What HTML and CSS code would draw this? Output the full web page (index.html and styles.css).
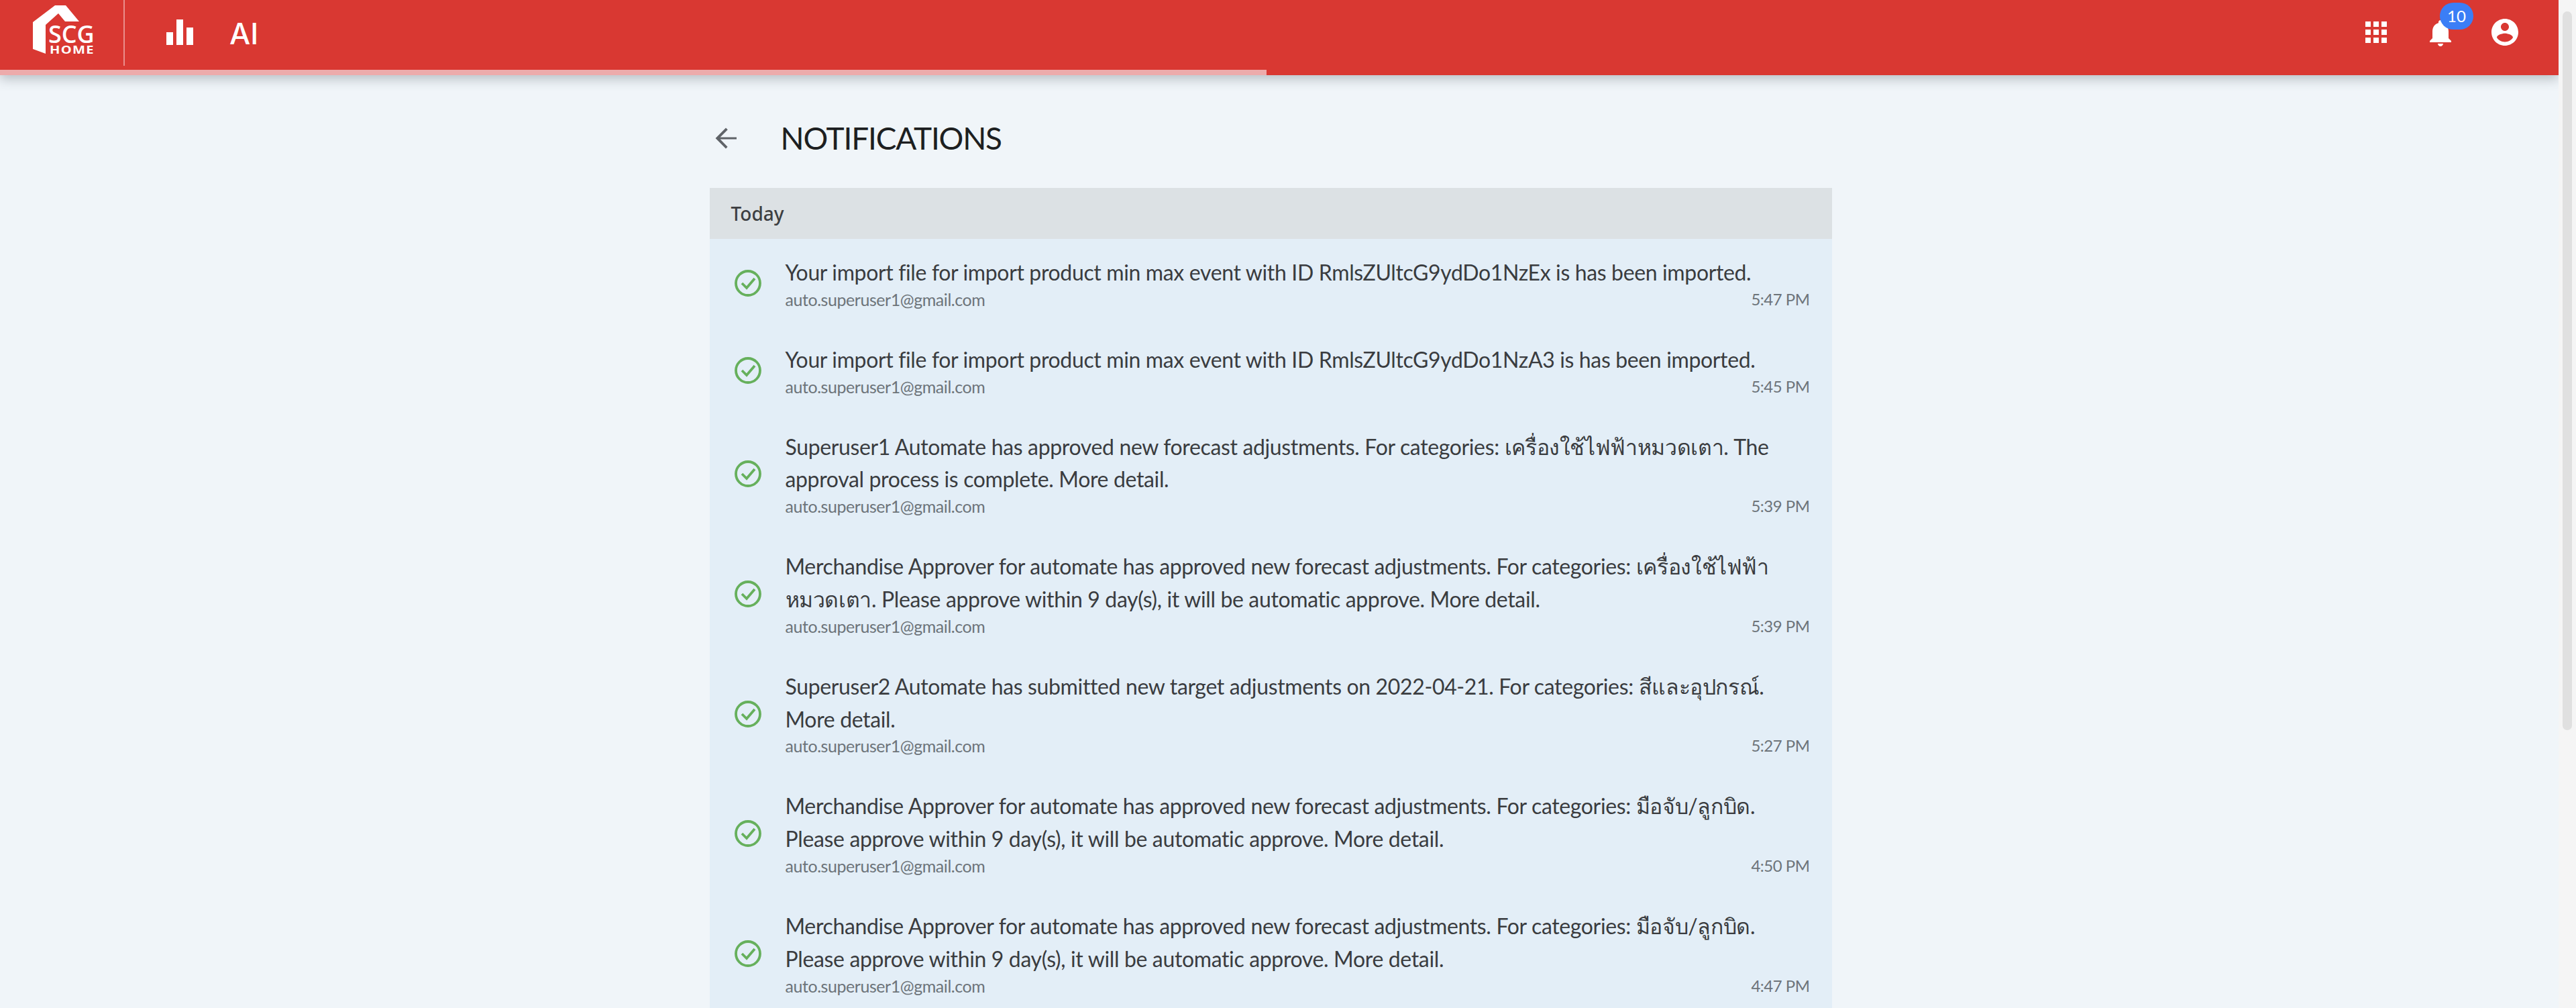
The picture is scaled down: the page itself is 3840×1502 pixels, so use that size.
FILE: index.html
```html
<!DOCTYPE html>
<html lang="en">
<head>
<meta charset="utf-8">
<title>Notifications</title>
<link rel="stylesheet" href="styles.css">
</head>
<body>
<div class="app">
  <div class="page">
    <header class="topbar">
      <div class="logo">
        <svg class="logo-house" viewBox="0 0 100 80" width="100" height="80"><path d="M0 25 L33 0 L49 0 L69 24 L48 24 L38 12 L19 29 L19 72 L0 65 Z" fill="#fff"/></svg>
        <span class="logo-scg">SCG</span>
        <span class="logo-home">HOME</span>
      </div>
      <div class="divider"></div>
      <svg class="chart" viewBox="0 0 40 38" width="40" height="38"><path d="M0 19h10v19H0zM15 0h10v38H15zM30 12h10v26H30z" fill="#fff"/></svg>
      <span class="brand">AI</span>
      <div class="spacer"></div>
      <svg class="apps" viewBox="0 0 32 32" width="32" height="32"><path d="M0 0h8v8H0zM12 0h8v8h-8zM24 0h8v8h-8zM0 12h8v8H0zM12 12h8v8h-8zM24 12h8v8h-8zM0 24h8v8H0zM12 24h8v8h-8zM24 24h8v8h-8z" fill="#fff"/></svg>
      <div class="bell-wrap">
        <svg class="bell" viewBox="4 2 16 20" width="32" height="40"><path d="M12 22c1.100 0 2-.9 2-2h-4c0 1.100.9 2 2 2zm6-6v-5c0-3.070-1.630-5.640-4.500-6.320V4c0-.83-.67-1.500-1.500-1.500s-1.500.67-1.500 1.500v.68C7.640 5.360 6 7.920 6 11v5l-2 2v1h16v-1l-2-2z" fill="#fff"/></svg>
        <span class="badge">10</span>
      </div>
      <svg class="account" viewBox="2 2 20 20" width="40" height="40"><path d="M12 2C6.480 2 2 6.480 2 12s4.480 10 10 10 10-4.480 10-10S17.520 2 12 2zm0 3c1.660 0 3 1.340 3 3s-1.340 3-3 3-3-1.340-3-3 1.340-3 3-3zm0 14.200c-2.500 0-4.710-1.280-6-3.220.03-1.990 4-3.080 6-3.080 1.990 0 5.970 1.090 6 3.080-1.290 1.940-3.500 3.220-6 3.220z" fill="#fff"/></svg>
      <div class="progress"></div>
    </header>
    <main class="content">
      <div class="title-row">
        <svg class="back" viewBox="4 4 16 16" width="32" height="32"><path d="M20 11.200H7.800l5.600-5.600L12 4.300 4.300 12l7.700 7.700 1.300-1.300-5.500-5.600H20z" fill="#5f6368"/></svg>
        <h1 class="title">NOTIFICATIONS</h1>
      </div>
      <section class="panel">
        <div class="day">Today</div>
        <div class="row">
          <svg class="check" viewBox="0 0 40 40" width="40" height="40"><circle cx="20" cy="20" r="18" fill="none" stroke="#66b05c" stroke-width="3.800"/><path d="M11 20l7 7 12-14" fill="none" stroke="#66b05c" stroke-width="3.800"/></svg>
          <div class="body">
            <p class="msg">Your import file for import product min max event with ID RmlsZUltcG9ydDo1NzEx is has been imported.</p>
            <div class="meta"><span>auto.superuser1@gmail.com</span><span class="time">5:47 PM</span></div>
          </div>
        </div>
        <div class="row">
          <svg class="check" viewBox="0 0 40 40" width="40" height="40"><circle cx="20" cy="20" r="18" fill="none" stroke="#66b05c" stroke-width="3.800"/><path d="M11 20l7 7 12-14" fill="none" stroke="#66b05c" stroke-width="3.800"/></svg>
          <div class="body">
            <p class="msg">Your import file for import product min max event with ID RmlsZUltcG9ydDo1NzA3 is has been imported.</p>
            <div class="meta"><span>auto.superuser1@gmail.com</span><span class="time">5:45 PM</span></div>
          </div>
        </div>
        <div class="row">
          <svg class="check" viewBox="0 0 40 40" width="40" height="40"><circle cx="20" cy="20" r="18" fill="none" stroke="#66b05c" stroke-width="3.800"/><path d="M11 20l7 7 12-14" fill="none" stroke="#66b05c" stroke-width="3.800"/></svg>
          <div class="body">
            <p class="msg">Superuser1 Automate has approved new forecast adjustments. For categories: เครื่องใช้ไฟฟ้าหมวดเตา. The<br>approval process is complete. More detail.</p>
            <div class="meta"><span>auto.superuser1@gmail.com</span><span class="time">5:39 PM</span></div>
          </div>
        </div>
        <div class="row">
          <svg class="check" viewBox="0 0 40 40" width="40" height="40"><circle cx="20" cy="20" r="18" fill="none" stroke="#66b05c" stroke-width="3.800"/><path d="M11 20l7 7 12-14" fill="none" stroke="#66b05c" stroke-width="3.800"/></svg>
          <div class="body">
            <p class="msg">Merchandise Approver for automate has approved new forecast adjustments. For categories: เครื่องใช้ไฟฟ้า<br>หมวดเตา. Please approve within 9 day(s), it will be automatic approve. More detail.</p>
            <div class="meta"><span>auto.superuser1@gmail.com</span><span class="time">5:39 PM</span></div>
          </div>
        </div>
        <div class="row">
          <svg class="check" viewBox="0 0 40 40" width="40" height="40"><circle cx="20" cy="20" r="18" fill="none" stroke="#66b05c" stroke-width="3.800"/><path d="M11 20l7 7 12-14" fill="none" stroke="#66b05c" stroke-width="3.800"/></svg>
          <div class="body">
            <p class="msg">Superuser2 Automate has submitted new target adjustments on 2022-04-21. For categories: สีและอุปกรณ์.<br>More detail.</p>
            <div class="meta"><span>auto.superuser1@gmail.com</span><span class="time">5:27 PM</span></div>
          </div>
        </div>
        <div class="row">
          <svg class="check" viewBox="0 0 40 40" width="40" height="40"><circle cx="20" cy="20" r="18" fill="none" stroke="#66b05c" stroke-width="3.800"/><path d="M11 20l7 7 12-14" fill="none" stroke="#66b05c" stroke-width="3.800"/></svg>
          <div class="body">
            <p class="msg">Merchandise Approver for automate has approved new forecast adjustments. For categories: มือจับ/ลูกบิด.<br>Please approve within 9 day(s), it will be automatic approve. More detail.</p>
            <div class="meta"><span>auto.superuser1@gmail.com</span><span class="time">4:50 PM</span></div>
          </div>
        </div>
        <div class="row">
          <svg class="check" viewBox="0 0 40 40" width="40" height="40"><circle cx="20" cy="20" r="18" fill="none" stroke="#66b05c" stroke-width="3.800"/><path d="M11 20l7 7 12-14" fill="none" stroke="#66b05c" stroke-width="3.800"/></svg>
          <div class="body">
            <p class="msg">Merchandise Approver for automate has approved new forecast adjustments. For categories: มือจับ/ลูกบิด.<br>Please approve within 9 day(s), it will be automatic approve. More detail.</p>
            <div class="meta"><span>auto.superuser1@gmail.com</span><span class="time">4:47 PM</span></div>
          </div>
        </div>
      </section>
    </main>
  </div>
  <div class="scrollbar"><div class="thumb"></div></div>
</div>
</body>
</html>
```
FILE: styles.css
```css
html, body { margin: 0; padding: 0; height: 100%; overflow: hidden; }
body { font-family: "Lato", "Noto Sans", sans-serif; background: #f0f5f9; color: #3a3c3f; }
.app { display: flex; height: 1502px; }
.page { flex: 1; min-width: 0; display: flex; flex-direction: column; overflow: hidden; }
.topbar { position: relative; flex: none; height: 112px; background: #d93832; box-shadow: 0 6px 16px rgba(60,70,80,.3); display: flex; align-items: flex-start; z-index: 2; color: #fff; }
.progress { position: absolute; left: 0; top: 104px; width: 1888px; height: 8px; background: #edabab; }
.logo { position: relative; width: 184px; height: 98px; flex: none; }
.logo-house { position: absolute; left: 49px; top: 8px; }
.logo-scg { position: absolute; left: 72px; top: 37px; font: 600 36px/28px "Open Sans", sans-serif; }
.logo-home { position: absolute; left: 74px; top: 67px; font: 700 15.500px/14px "Open Sans", sans-serif; letter-spacing: 1px; transform: scaleX(1.300); transform-origin: left center; }
.divider { width: 2px; height: 98px; background: #ea8e8c; flex: none; }
.chart { margin: 29px 0 0 62px; flex: none; }
.brand { margin: 20px 0 0 54px; font: 500 44px/60px "Inter", sans-serif; }
.spacer { flex: 1; }
.apps { margin-top: 32px; flex: none; }
.bell-wrap { position: relative; margin: 29px 0 0 64px; width: 32px; height: 40px; flex: none; }
.bell { display: block; }
.badge { position: absolute; left: 15px; top: -25px; width: 50px; height: 40px; border-radius: 20px; background: #3b7ef6; text-align: center; font: 400 24px/40px "Lato", sans-serif; }
.account { margin: 28px 60px 0 60px; flex: none; }
.content { width: 1673px; margin: 0 auto; position: relative; left: -13px; }
.title-row { display: flex; align-items: center; height: 168px; }
.back { margin: 20px 0 0 8px; flex: none; }
.title { margin: 20px 0 0 66px; font: 400 46px/60px "Lato", sans-serif; letter-spacing: -1.200px; color: #1d1f21; }
.panel { background: #e3eef7; }
.day { height: 76px; line-height: 76px; padding-left: 32px; background: #dce1e4; font-family: "Noto Sans", sans-serif; font-size: 28px; font-weight: 500; color: #3d3f42; }
.row { display: flex; align-items: center; padding: 26px 33px 25px 37px; gap: 36px; }
.check { flex: none; margin-top: 2px; }
.body { flex: 1; min-width: 0; }
.msg { margin: 0; font-size: 32px; letter-spacing: -.360px; line-height: 48.800px; color: #3a3c3f; }
.meta { display: flex; justify-content: space-between; font-size: 25px; letter-spacing: -.450px; line-height: 30px; color: #6d747a; }
.time { font-size: 24px; letter-spacing: -.500px; }
.scrollbar { width: 26px; flex: none; background: #f5f5f5; }
.thumb { margin: 17px 6px 0; height: 1071px; border-radius: 7px; background: #e0e0e0; }
```
